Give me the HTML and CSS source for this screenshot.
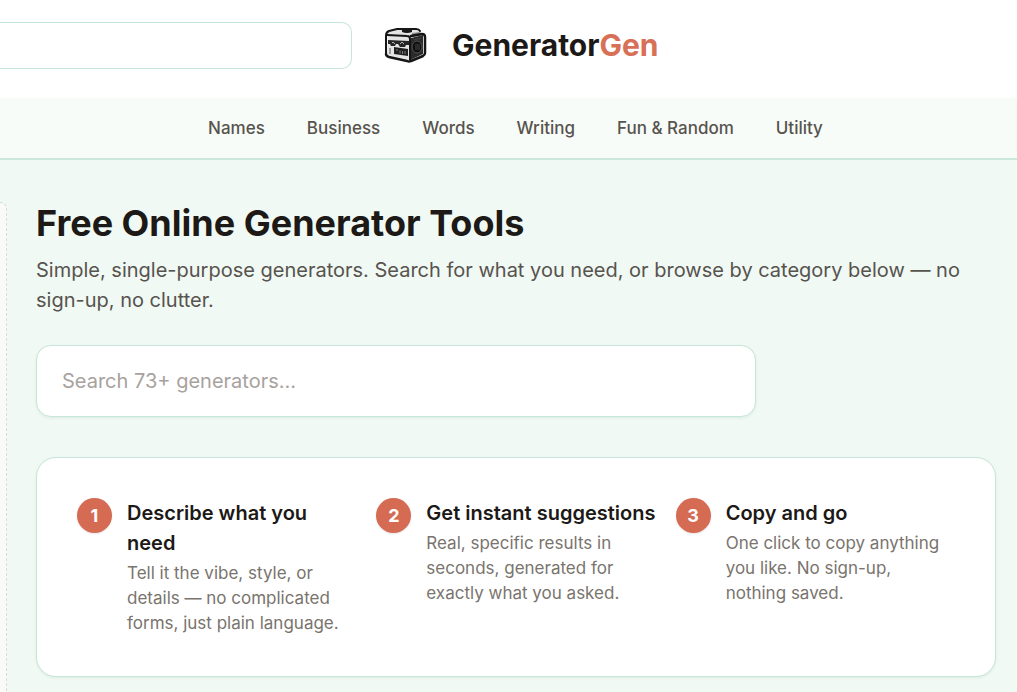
FILE: index.html
```html
<!DOCTYPE html>
<html lang="en">
<head>
<meta charset="utf-8">
<meta name="viewport" content="width=device-width, initial-scale=1">
<title>GeneratorGen</title>
<link rel="stylesheet" href="styles.css">
</head>
<body>
<header class="site-header">
  <input class="header-search" type="search" aria-label="Search generators">
  <a class="brand" href="#">
    <svg class="brand-icon" viewBox="0 0 44 38" aria-hidden="true">
      <path d="M4 6 14 3 34 4 38 9 26 12V34L3 29Z" fill="#e4e4e4"/>
      <path d="M27 12 39 9V28L26 34Z" fill="#2b2b2b"/>
      <path d="M28 7 36 6 38 9 28 11Z" fill="#8c8c8c"/>
      <path d="M4 14 25 15V19H22L21 21H16L14 18H12L11 20H7L6 18H4Z" fill="#262626"/>
      <path d="M8 17l1-1 2 2M16 18l2-2 2 2" fill="none" stroke="#b5b5b5" stroke-width="1"/>
      <path d="M10 21 24 23V30L10 28Z" fill="#202020"/>
      <path d="M12 24h2M16 24.500v3M18.500 25v3M21 25v3" stroke="#777777" stroke-width="1"/>
      <path d="M6 22v6" stroke="#555555" stroke-width="1"/>
      <path d="M2 28V10Q2 6 5 5L13 3H32Q35 3 36 5" fill="none" stroke="#151515" stroke-width="2" stroke-linecap="round"/>
      <path d="M3 9 23 10Q26 10 26 13V34" fill="none" stroke="#151515" stroke-width="2" stroke-linecap="round"/>
      <path d="M2 28Q2 30 5 31L23 35Q25 36 27 35L39 30Q41 29 41 27V11Q41 8 38 8L27 10" fill="none" stroke="#151515" stroke-width="2.500" stroke-linecap="round"/>
      <path d="M18 4Q18 2 21 2H25Q28 2 28 4V6Q23 8 18 6Z" fill="#181818"/>
      <ellipse cx="33" cy="21" rx="5" ry="6" fill="#111111" stroke="#505050" stroke-width="1"/>
      <path d="M31 19h5M31 21h5M31 23h5M30 14l7-2" stroke="#444444" stroke-width="1"/>
    </svg>
    <span class="brand-name">Generator<span class="brand-accent">Gen</span></span>
  </a>
</header>
<nav class="site-nav" aria-label="Categories">
  <a href="#">Names</a>
  <a href="#">Business</a>
  <a href="#">Words</a>
  <a href="#">Writing</a>
  <a href="#">Fun &amp; Random</a>
  <a href="#">Utility</a>
</nav>
<div class="layout">
  <aside class="side-slot"></aside>
  <main class="content">
    <h1 class="title">Free Online Generator Tools</h1>
    <p class="intro">Simple, single-purpose generators. Search for what you need, or browse by category below — no sign-up, no clutter.</p>
    <input class="search" type="search" aria-label="Search all generators" placeholder="Search 73+ generators...">
    <ol class="steps">
      <li class="step">
        <span class="step-number">1</span>
        <div class="step-body">
          <h2 class="step-title">Describe what you need</h2>
          <p class="step-text">Tell it the vibe, style, or details — no complicated forms, just plain language.</p>
        </div>
      </li>
      <li class="step">
        <span class="step-number">2</span>
        <div class="step-body">
          <h2 class="step-title">Get instant suggestions</h2>
          <p class="step-text">Real, specific results in seconds, generated for exactly what you asked.</p>
        </div>
      </li>
      <li class="step">
        <span class="step-number">3</span>
        <div class="step-body">
          <h2 class="step-title">Copy and go</h2>
          <p class="step-text">One click to copy anything you like. No sign-up, nothing saved.</p>
        </div>
      </li>
    </ol>
  </main>
</div>
</body>
</html>
```
FILE: styles.css
```css
* {
  box-sizing: border-box;
}

body {
  margin: 0;
  min-height: 100vh;
  display: flex;
  flex-direction: column;
  background: #f0f9f4;
  color: #1c1917;
  font-family: Inter, "Liberation Sans", sans-serif;
  font-size: 20px;
  line-height: 30px;
}

h1,
h2,
p,
ol {
  margin: 0;
  padding: 0;
}

a {
  color: inherit;
  text-decoration: none;
}

input {
  appearance: none;
  margin: 0;
  background: #ffffff;
  border: 1px solid #c6e6d9;
  font: inherit;
  color: inherit;
  outline: none;
}

.site-header {
  display: flex;
  align-items: flex-start;
  gap: 32px;
  padding: 22px 24px 29px 0;
  background: #ffffff;
}

.header-search {
  width: 352px;
  height: 47px;
  padding: 0 16px;
  border-left: 0;
  border-radius: 0 10px 10px 0;
}

.brand {
  display: flex;
  align-items: center;
  gap: 24px;
  height: 46px;
}

.brand-icon {
  width: 44px;
  height: 38px;
}

.brand-name {
  font-size: 30px;
  font-weight: 700;
  line-height: 40px;
}

.brand-accent {
  color: #d86f57;
}

.site-nav {
  display: flex;
  justify-content: center;
  gap: 42px;
  padding: 18px 0 17px 14px;
  background: #f7fcf9;
  border-bottom: 2px solid #cce8dd;
  color: #57534e;
  font-size: 17px;
  font-weight: 500;
  line-height: 25px;
}

.layout {
  display: flex;
  flex: 1;
  gap: 29px;
  padding: 42px 21px 0 0;
}

.side-slot {
  flex: 0 0 7px;
  background: #fafaf9;
  border-right: 1px dashed #d6dcd8;
  border-top: 1px dashed #d6dcd8;
  border-top-right-radius: 7px;
}

.content {
  flex: 1;
  min-width: 0;
  padding-bottom: 15px;
}

.title {
  font-size: 36px;
  font-weight: 700;
  line-height: 42px;
}

.intro {
  margin-top: 11px;
  color: #57534e;
}

.search {
  display: block;
  width: 75%;
  height: 72px;
  margin-top: 30px;
  padding: 0 25px;
  border-radius: 15px;
  box-shadow: 0 1px 3px rgba(28, 80, 60, 0.08);
}

.search::placeholder {
  color: #a8a29e;
  opacity: 1;
}

.steps {
  display: grid;
  grid-template-columns: repeat(3, 1fr);
  gap: 20px;
  margin-top: 40px;
  padding: 40px;
  list-style: none;
  background: #ffffff;
  border: 1px solid #c6e6d9;
  border-radius: 20px;
  box-shadow: 0 1px 3px rgba(28, 80, 60, 0.08);
}

.step {
  display: flex;
  align-items: flex-start;
  gap: 15px;
}

.step-number {
  flex: none;
  width: 35px;
  height: 35px;
  border-radius: 50%;
  background: #d56b53;
  box-shadow: 0 1px 2px rgba(0, 0, 0, 0.1);
  color: #ffffff;
  font-size: 18px;
  font-weight: 700;
  line-height: 35px;
  text-align: center;
}

.step-body {
  min-width: 0;
}

.step-title {
  font-size: 20px;
  font-weight: 600;
  line-height: 30px;
}

.step-text {
  margin-top: 3px;
  color: #79746e;
  font-size: 17px;
  line-height: 25px;
}
```
